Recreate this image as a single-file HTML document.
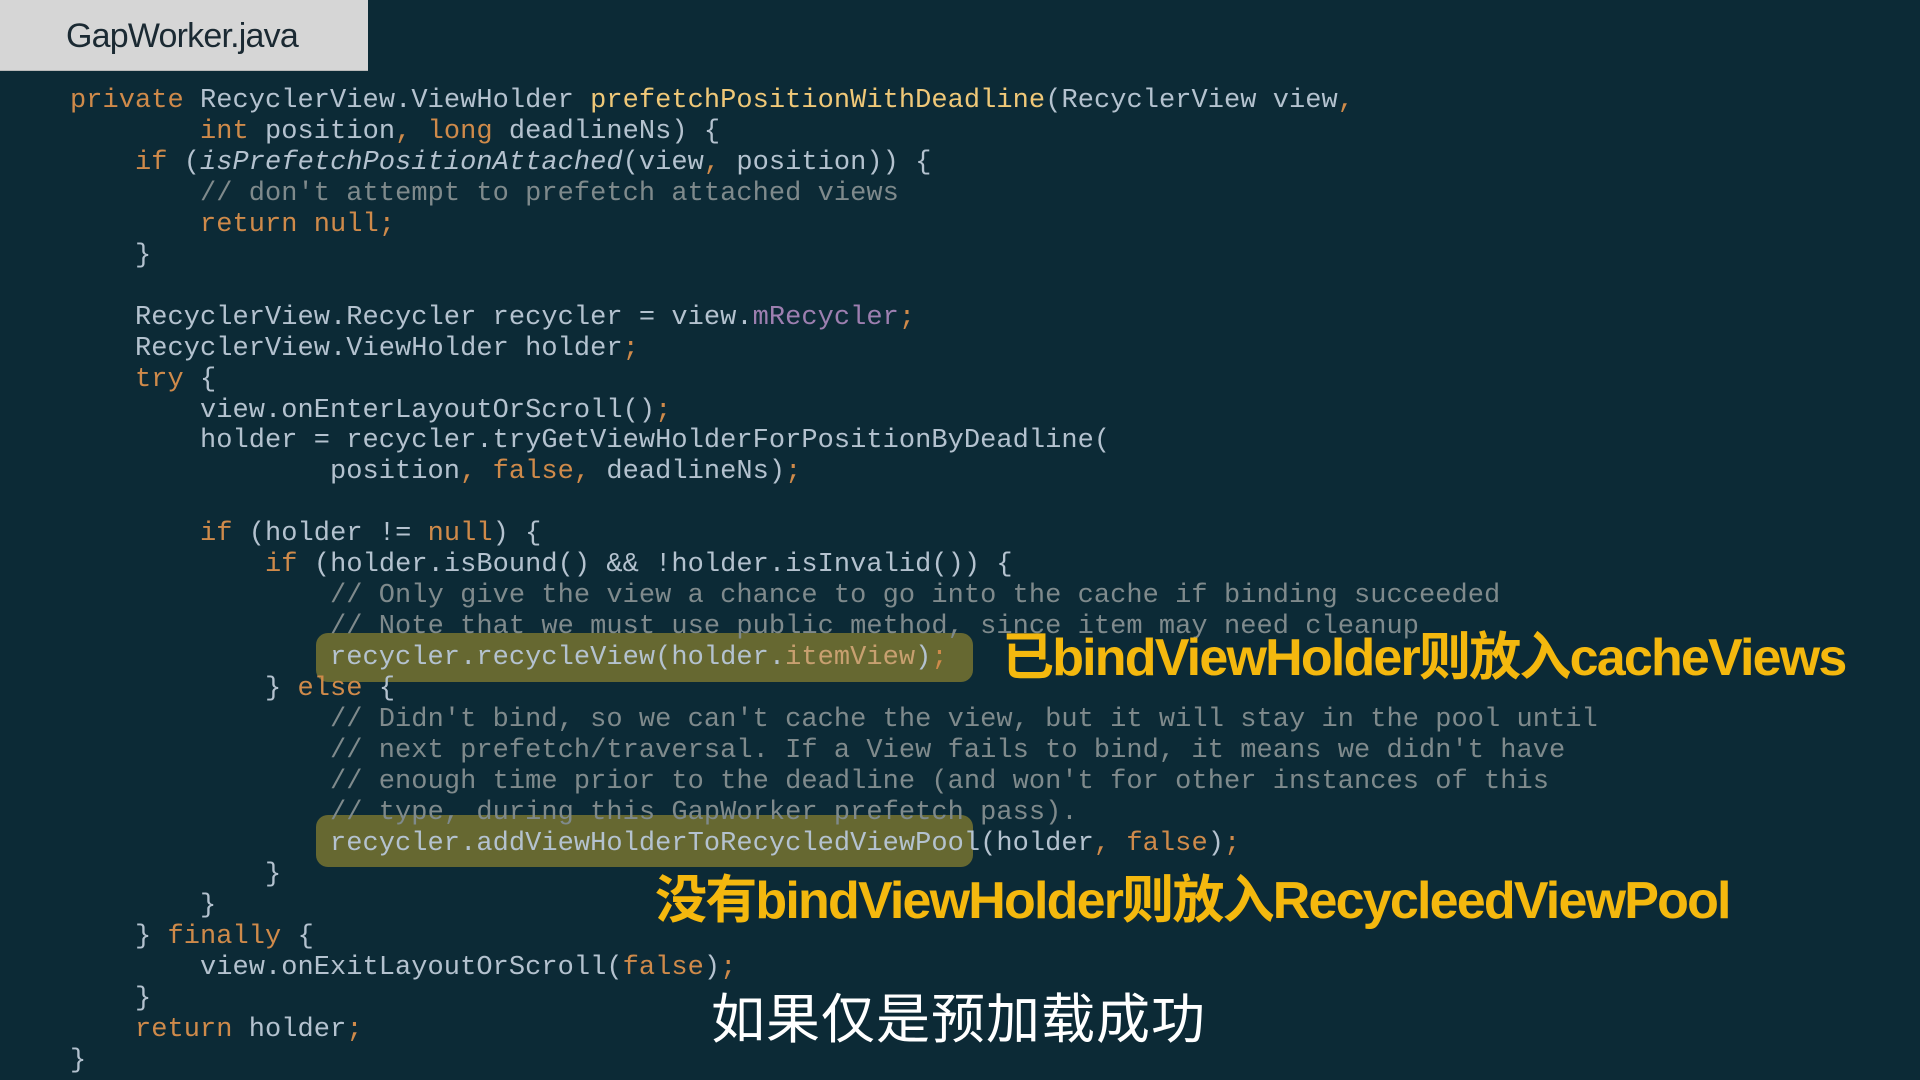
<!DOCTYPE html>
<html><head><meta charset="utf-8"><style>
html,body{margin:0;padding:0}
body{width:1920px;height:1080px;background:#0c2a36;position:relative;overflow:hidden}
.tab{position:absolute;left:0;top:0;width:368px;height:70px;background:#d6d6d6;border-bottom:1px solid #b9b9b9}
.tab span{position:absolute;left:66px;top:17px;font:34px "Liberation Sans",sans-serif;color:#1b2a33;letter-spacing:-0.8px}
.hl{position:absolute;background:rgba(128,122,48,0.78);border-radius:12px}
pre{position:absolute;left:70px;top:86px;margin:0;font-family:"Liberation Mono",monospace;font-size:27px;line-height:30.95px;color:#b4c2cf;letter-spacing:0.05px}
.k{color:#cf8a4a}.c{color:#7f8a8c}.m{color:#f0c878}.f{color:#9d7fb0}.i{font-style:italic}
.lab{position:absolute;font-family:"Liberation Sans","Noto Sans CJK SC",sans-serif;font-weight:bold;color:#f4b80e;font-size:52px;line-height:1;white-space:nowrap;letter-spacing:-1.8px}
.sub{position:absolute;left:711px;top:975px;font-family:"Noto Sans CJK SC",sans-serif;font-size:54px;color:#fff;white-space:nowrap;letter-spacing:1px}
</style></head><body>
<div class="tab"><span>GapWorker.java</span></div>
<div class="hl" style="left:316px;top:633px;width:657px;height:49px"></div>
<div class="hl" style="left:316px;top:815px;width:657px;height:52px"></div>
<pre><span class="k">private</span> RecyclerView.ViewHolder <span class="m">prefetchPositionWithDeadline</span>(RecyclerView view<span class="k">,</span>
        <span class="k">int</span> position<span class="k">, long</span> deadlineNs) {
    <span class="k">if</span> (<span class="i">isPrefetchPositionAttached</span>(view<span class="k">,</span> position)) {
        <span class="c">// don't attempt to prefetch attached views</span>
        <span class="k">return null;</span>
    }

    RecyclerView.Recycler recycler = view.<span class="f">mRecycler</span><span class="k">;</span>
    RecyclerView.ViewHolder holder<span class="k">;</span>
    <span class="k">try</span> {
        view.onEnterLayoutOrScroll()<span class="k">;</span>
        holder = recycler.tryGetViewHolderForPositionByDeadline(
                position<span class="k">, false,</span> deadlineNs)<span class="k">;</span>

        <span class="k">if</span> (holder != <span class="k">null</span>) {
            <span class="k">if</span> (holder.isBound() &amp;&amp; !holder.isInvalid()) {
                <span class="c">// Only give the view a chance to go into the cache if binding succeeded</span>
                <span class="c">// Note that we must use public method, since item may need cleanup</span>
                recycler.recycleView(holder.<span class="f" style="color:#c8a070">itemView</span>)<span class="k">;</span>
            } <span class="k">else</span> {
                <span class="c">// Didn't bind, so we can't cache the view, but it will stay in the pool until</span>
                <span class="c">// next prefetch/traversal. If a View fails to bind, it means we didn't have</span>
                <span class="c">// enough time prior to the deadline (and won't for other instances of this</span>
                <span class="c">// type, during this GapWorker prefetch pass).</span>
                recycler.addViewHolderToRecycledViewPool(holder<span class="k">, false</span>)<span class="k">;</span>
            }
        }
    } <span class="k">finally</span> {
        view.onExitLayoutOrScroll(<span class="k">false</span>)<span class="k">;</span>
    }
    <span class="k">return</span> holder<span class="k">;</span>
}</pre>
<div class="lab" style="left:1002px;top:632px">已bindViewHolder则放入cacheViews</div>
<div class="lab" style="left:655px;top:875px">没有bindViewHolder则放入RecycleedViewPool</div>
<div class="sub">如果仅是预加载成功</div>
</body></html>
